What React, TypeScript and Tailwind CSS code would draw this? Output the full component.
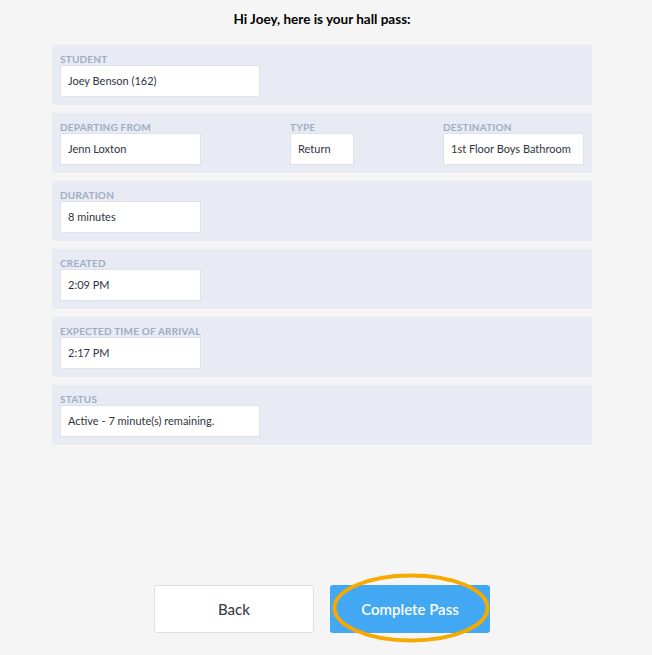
const Field = ({ label, value, width }: { label: string; value: string; width: string }) => (
  <div className="flex flex-col">
    <div className="text-[10px] font-bold uppercase leading-[12px] tracking-[0.02em] text-[#9fadc4]">{label}</div>
    <div className={`${width} flex h-[32px] items-center border border-[#dde1ea] bg-white px-[7px] text-[11px] text-[#2f3440]`}>
      {value}
    </div>
  </div>
)

const Panel = ({ children }: { children: React.ReactNode }) => (
  <div className="flex h-[60px] items-start bg-[#e8ebf3] pl-[8px] pt-[8px]">{children}</div>
)

export default function App() {
  return (
    <div className="h-[655px] w-[652px] bg-[#f5f5f5] font-['Lato',sans-serif]">
      <div className="flex w-[644px] flex-col items-center">
        <h1 className="mt-[11px] text-[13.5px] font-bold leading-[16px] text-black">Hi Joey, here is your hall pass:</h1>
        <div className="mt-[18px] flex w-[540px] flex-col gap-[8px]">
          <Panel>
            <Field label="Student" value="Joey Benson (162)" width="w-[200px]" />
          </Panel>
          <Panel>
            <Field label="Departing From" value="Jenn Loxton" width="w-[141px]" />
            <div className="ml-[89px]">
              <Field label="Type" value="Return" width="w-[64px]" />
            </div>
            <div className="ml-[89px]">
              <Field label="Destination" value="1st Floor Boys Bathroom" width="w-[141px]" />
            </div>
          </Panel>
          <Panel>
            <Field label="Duration" value="8 minutes" width="w-[141px]" />
          </Panel>
          <Panel>
            <Field label="Created" value="2:09 PM" width="w-[141px]" />
          </Panel>
          <Panel>
            <Field label="Expected Time of Arrival" value="2:17 PM" width="w-[141px]" />
          </Panel>
          <Panel>
            <Field label="Status" value="Active - 7 minute(s) remaining." width="w-[200px]" />
          </Panel>
        </div>
        <div className="mt-[140px] flex gap-[16px]">
          <button className="h-[48px] w-[160px] rounded-[3px] border border-[#dcdfe6] bg-white text-[15px] font-medium text-[#3a3f4a]">
            Back
          </button>
          <div className="relative">
            <button className="h-[48px] w-[160px] rounded-[3px] bg-[#42a8f3] text-[15px] font-semibold text-white">
              Complete Pass
            </button>
            <svg className="pointer-events-none absolute left-[2px] top-[-12px]" width="158" height="70" viewBox="0 0 158 70">
              <ellipse cx="79" cy="35" rx="76.5" ry="32.5" fill="none" stroke="#f7a900" strokeWidth="4" />
            </svg>
          </div>
        </div>
      </div>
    </div>
  )
}
